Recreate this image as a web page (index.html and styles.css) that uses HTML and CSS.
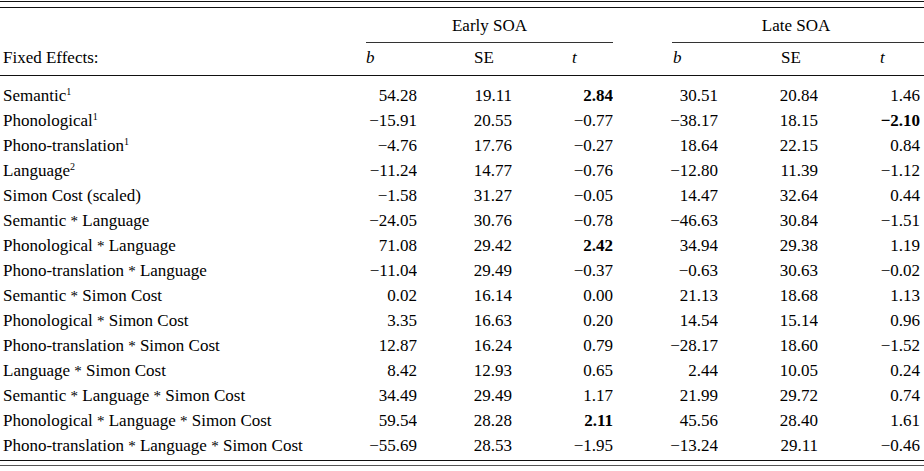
FILE: index.html
```html
<!DOCTYPE html>
<html>
<head>
<meta charset="utf-8">
<link rel="stylesheet" href="styles.css">
</head>
<body>
<div class="wrap">
<table class="tbl">
<colgroup>
<col class="c0"><col class="c1"><col class="c2"><col class="c3"><col class="c4"><col class="c5"><col class="c6">
</colgroup>
<thead>
<tr class="h1">
<th></th>
<th colspan="3"><div class="span early">Early SOA</div></th>
<th colspan="3"><div class="span late">Late SOA</div></th>
</tr>
<tr class="h2">
<th class="lab">Fixed Effects:</th>
<th class="p1"><i>b</i></th>
<th class="p2">SE</th>
<th class="p3"><i>t</i></th>
<th class="p4"><i>b</i></th>
<th class="p5">SE</th>
<th class="p6"><i>t</i></th>
</tr>
</thead>
<tbody>
<tr class="first"><td class="lab">Semantic<sup>1</sup></td><td>54.28</td><td>19.11</td><td><b>2.84</b></td><td>30.51</td><td>20.84</td><td>1.46</td></tr>
<tr><td class="lab">Phonological<sup>1</sup></td><td>−15.91</td><td>20.55</td><td>−0.77</td><td>−38.17</td><td>18.15</td><td><b>−2.10</b></td></tr>
<tr><td class="lab">Phono-translation<sup>1</sup></td><td>−4.76</td><td>17.76</td><td>−0.27</td><td>18.64</td><td>22.15</td><td>0.84</td></tr>
<tr><td class="lab">Language<sup>2</sup></td><td>−11.24</td><td>14.77</td><td>−0.76</td><td>−12.80</td><td>11.39</td><td>−1.12</td></tr>
<tr><td class="lab">Simon Cost (scaled)</td><td>−1.58</td><td>31.27</td><td>−0.05</td><td>14.47</td><td>32.64</td><td>0.44</td></tr>
<tr><td class="lab">Semantic <span class="ast">*</span> Language</td><td>−24.05</td><td>30.76</td><td>−0.78</td><td>−46.63</td><td>30.84</td><td>−1.51</td></tr>
<tr><td class="lab">Phonological <span class="ast">*</span> Language</td><td>71.08</td><td>29.42</td><td><b>2.42</b></td><td>34.94</td><td>29.38</td><td>1.19</td></tr>
<tr><td class="lab">Phono-translation <span class="ast">*</span> Language</td><td>−11.04</td><td>29.49</td><td>−0.37</td><td>−0.63</td><td>30.63</td><td>−0.02</td></tr>
<tr><td class="lab">Semantic <span class="ast">*</span> Simon Cost</td><td>0.02</td><td>16.14</td><td>0.00</td><td>21.13</td><td>18.68</td><td>1.13</td></tr>
<tr><td class="lab">Phonological <span class="ast">*</span> Simon Cost</td><td>3.35</td><td>16.63</td><td>0.20</td><td>14.54</td><td>15.14</td><td>0.96</td></tr>
<tr><td class="lab">Phono-translation <span class="ast">*</span> Simon Cost</td><td>12.87</td><td>16.24</td><td>0.79</td><td>−28.17</td><td>18.60</td><td>−1.52</td></tr>
<tr><td class="lab">Language <span class="ast">*</span> Simon Cost</td><td>8.42</td><td>12.93</td><td>0.65</td><td>2.44</td><td>10.05</td><td>0.24</td></tr>
<tr><td class="lab">Semantic <span class="ast">*</span> Language <span class="ast">*</span> Simon Cost</td><td>34.49</td><td>29.49</td><td>1.17</td><td>21.99</td><td>29.72</td><td>0.74</td></tr>
<tr><td class="lab">Phonological <span class="ast">*</span> Language <span class="ast">*</span> Simon Cost</td><td>59.54</td><td>28.28</td><td><b>2.11</b></td><td>45.56</td><td>28.40</td><td>1.61</td></tr>
<tr class="last"><td class="lab">Phono-translation <span class="ast">*</span> Language <span class="ast">*</span> Simon Cost</td><td>−55.69</td><td>28.53</td><td>−1.95</td><td>−13.24</td><td>29.11</td><td>−0.46</td></tr>
</tbody>
</table>
</div>
</body>
</html>
```

FILE: styles.css
```css
html, body {
  margin: 0;
  padding: 0;
  background: #fff;
}
body {
  font-family: "Liberation Serif", "Times New Roman", serif;
  font-size: 17px;
  color: #000;
}
.wrap {
  width: 924px;
  margin-top: 1px;
  border-top: 1px solid #111;
  padding-top: 5px;
  padding-bottom: 4px;
  border-bottom: 1px solid #555;
}
.tbl {
  width: 924px;
  table-layout: fixed;
  border-collapse: separate;
  border-spacing: 0;
  border-top: 1px solid #111;
  border-bottom: 1px solid #111;
}
.c0 { width: 366px; }
.c1 { width: 51px; }
.c2 { width: 95px; }
.c3 { width: 101px; }
.c4 { width: 105px; }
.c5 { width: 100px; }
.c6 { width: 106px; }
th {
  font-weight: normal;
  text-align: left;
  padding: 0;
}
.h1 th {
  padding: 0;
  vertical-align: bottom;
}
.span {
  line-height: 20px;
  padding-top: 8px;
  padding-bottom: 6px;
  border-bottom: 1px solid #333;
  text-align: center;
}
.late {
  margin-left: 59px;
  padding-right: 4px;
}
.h2 th {
  line-height: 20px;
  padding-top: 5px;
  padding-bottom: 7px;
  border-bottom: 1px solid #111;
}
.h2 .lab { padding-left: 3px; }
.p1 { padding-left: 0; }
.h2 .p2 { padding-left: 57px; }
.h2 .p3 { padding-left: 60px; }
.h2 .p4 { padding-left: 60px; }
.h2 .p5 { padding-left: 63px; }
.h2 .p6 { padding-left: 62px; }
td {
  padding: 0;
  height: 25px;
  line-height: 25px;
  text-align: right;
  white-space: nowrap;
  overflow: hidden;
}
td:last-child { padding-right: 4px; }
td.lab {
  text-align: left;
  padding-left: 3px;
}
.first td { padding-top: 7px; }
.last td { padding-bottom: 2px; }
sup {
  font-size: 10px;
  line-height: 0;
  vertical-align: 6px;
}
.ast {
  font-size: 15px;
  line-height: 0;
}
b { font-weight: bold; }
```
